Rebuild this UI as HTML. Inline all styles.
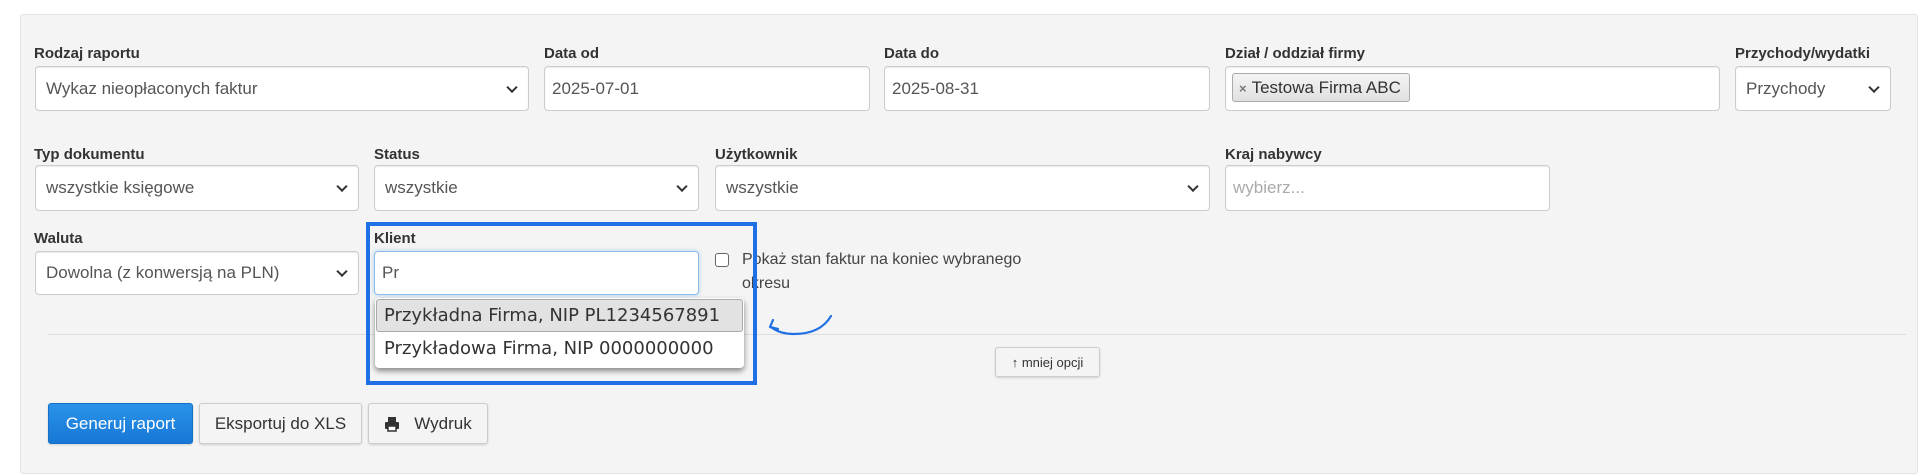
<!DOCTYPE html>
<html><head><meta charset="utf-8"><style>
*{box-sizing:border-box;margin:0;padding:0}
body{width:1920px;height:476px;background:#fff;font-family:"Liberation Sans",Arial,sans-serif;color:#333;position:relative;overflow:hidden}
.panel{position:absolute;left:20px;top:14px;width:1898px;height:460px;background:#f4f4f4;border:1px solid #e3e3e3;border-radius:3px}
.lbl{position:absolute;font-weight:bold;font-size:15px;color:#333}
.in{position:absolute;background:#fff;border:1px solid #ccc;border-radius:4px;font-size:17px;color:#555;padding-left:10px;display:flex;align-items:center;box-shadow:inset 0 1px 1px rgba(0,0,0,.075)}
.sel::after{content:"";position:absolute;right:12px;top:50%;width:6px;height:6px;border-right:2px solid #333;border-bottom:2px solid #333;transform:translateY(-70%) rotate(45deg)}
.btn{position:absolute;border:1px solid #ccc;border-radius:3px;background:#f4f4f4;font-size:17px;color:#333;display:flex;align-items:center;justify-content:center;box-shadow:0 1px 2px rgba(0,0,0,.15)}
</style></head><body>
<div class="panel"></div>
<div class="lbl" style="left:34px;top:45px">Rodzaj raportu</div>
<div class="in sel" style="left:35px;top:66px;width:494px;height:45px">Wykaz nieopłaconych faktur</div>
<div class="lbl" style="left:544px;top:45px">Data od</div>
<div class="in" style="left:544px;top:66px;width:326px;height:45px;padding-left:7px">2025-07-01</div>
<div class="lbl" style="left:884px;top:45px">Data do</div>
<div class="in" style="left:884px;top:66px;width:326px;height:45px;padding-left:7px">2025-08-31</div>
<div class="lbl" style="left:1225px;top:45px">Dział / oddział firmy</div>
<div class="in" style="left:1225px;top:66px;width:495px;height:45px;padding-left:6px;align-items:flex-start;padding-top:6px">
<span style="display:inline-block;border:1px solid #aaa;border-radius:3px;background:linear-gradient(#f4f4f4,#e0e0e0);height:29px;line-height:27px;padding:0 8px 0 6px;font-size:17px;color:#333"><span style="color:#777;font-size:13px;font-weight:bold;margin-right:5px">×</span>Testowa Firma ABC</span></div>
<div class="lbl" style="left:1735px;top:45px">Przychody/wydatki</div>
<div class="in sel" style="left:1735px;top:66px;width:156px;height:45px">Przychody</div>

<div class="lbl" style="left:34px;top:146px">Typ dokumentu</div>
<div class="in sel" style="left:35px;top:165px;width:324px;height:46px">wszystkie księgowe</div>
<div class="lbl" style="left:374px;top:146px">Status</div>
<div class="in sel" style="left:374px;top:165px;width:325px;height:46px">wszystkie</div>
<div class="lbl" style="left:715px;top:146px">Użytkownik</div>
<div class="in sel" style="left:715px;top:165px;width:495px;height:46px">wszystkie</div>
<div class="lbl" style="left:1225px;top:146px">Kraj nabywcy</div>
<div class="in" style="left:1225px;top:165px;width:325px;height:46px;color:#aaa;padding-left:7px">wybierz...</div>

<div class="lbl" style="left:34px;top:230px">Waluta</div>
<div class="in sel" style="left:35px;top:251px;width:324px;height:44px">Dowolna (z konwersją na PLN)</div>
<div class="lbl" style="left:374px;top:230px">Klient</div>
<div class="in" style="left:374px;top:251px;width:325px;height:44px;border-color:#8cbcec;box-shadow:0 0 4px rgba(102,175,233,.5);padding-left:7px">Pr</div>
<div style="position:absolute;left:715px;top:253px;width:14px;height:14px;border:1px solid #666;border-radius:3px;background:#fff"></div>
<div style="position:absolute;left:742px;top:248px;font-size:16px;line-height:24px;width:300px;color:#444">Pokaż stan faktur na koniec wybranego okresu</div>

<div style="position:absolute;left:48px;top:334px;width:1858px;height:1px;background:#ddd"></div>

<div style="position:absolute;left:375px;top:298px;width:369px;height:70px;background:#fff;border-radius:4px;box-shadow:0 3px 6px rgba(0,0,0,.45);font-family:'DejaVu Sans',Verdana,sans-serif;font-size:18px;color:#333;white-space:nowrap">
<div style="position:absolute;left:1px;top:1px;right:1px;height:33px;background:#e2e2e2;border:1px solid #aaa;border-radius:3px;padding-left:7px;line-height:31px">Przykładna Firma, NIP PL1234567891</div>
<div style="position:absolute;left:9px;top:35px;line-height:32px">Przykładowa Firma, NIP 0000000000</div>
</div>
<div style="position:absolute;left:366px;top:222px;width:391px;height:163px;border:4px solid #1f6fe5"></div>
<svg style="position:absolute;left:760px;top:312px" width="80" height="30" viewBox="0 0 80 30"><path d="M71 4 C64 16 52 22 34 22 C24 22 16 19 11 15" fill="none" stroke="#1f6fe5" stroke-width="2.2" stroke-linecap="round"/><path d="M13 8 L10 15 L18 17" fill="none" stroke="#1f6fe5" stroke-width="2.2" stroke-linecap="round" stroke-linejoin="round"/></svg>

<div class="btn" style="left:995px;top:347px;width:105px;height:30px;font-size:13px">↑ mniej opcji</div>

<div class="btn" style="left:48px;top:403px;width:145px;height:41px;background:linear-gradient(#2a93e8,#1777d6);border-color:#1670c8;color:#fff">Generuj raport</div>
<div class="btn" style="left:199px;top:403px;width:163px;height:41px">Eksportuj do XLS</div>
<div class="btn" style="left:368px;top:403px;width:120px;height:41px"><svg width="16" height="16" viewBox="0 0 16 16" style="margin-right:14px"><rect x="4" y="1" width="8" height="5" fill="#333"/><rect x="1" y="6" width="14" height="7" rx="1" fill="#333"/><rect x="4" y="10" width="8" height="5" fill="#fff" stroke="#333" stroke-width="1.5"/></svg>Wydruk</div>
</body></html>
